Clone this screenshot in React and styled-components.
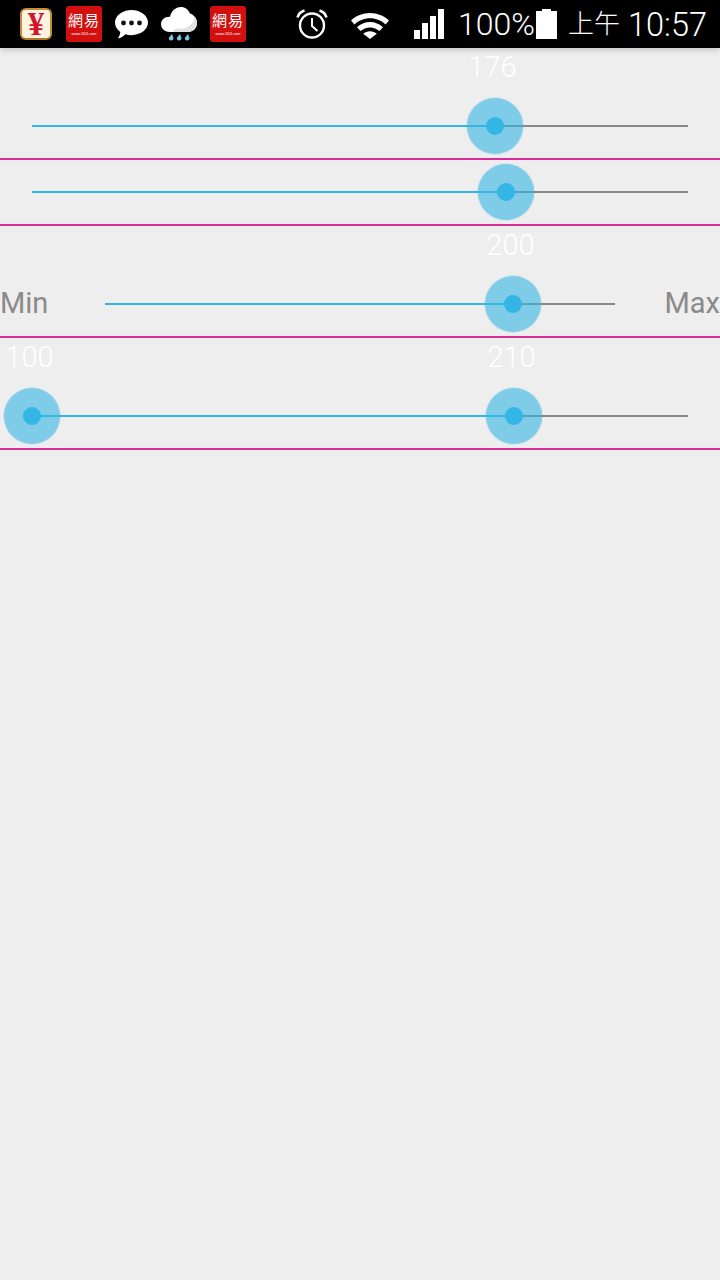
import React from "react";
import styled, { createGlobalStyle } from "styled-components";

const GlobalStyle = createGlobalStyle`
  html, body {
    margin: 0;
    padding: 0;
    background: #eeeeee;
    font-family: Roboto, "Noto Sans", sans-serif;
  }
`;

// slider data, pos is the thumb place along the track (0..1)
const sliders = [
  { id: 1, labeled: true, thumbs: [{ pos: 0.7058, label: "176" }] },
  { id: 2, labeled: false, thumbs: [{ pos: 0.7226 }] },
  { id: 3, labeled: true, min: "Min", max: "Max", thumbs: [{ pos: 0.8, label: "200" }] },
  {
    id: 4,
    labeled: true,
    thumbs: [
      { pos: 0, label: "100" },
      { pos: 0.7348, label: "210" },
    ],
  },
];

function NeteaseIcon() {
  return (
    <Netease>
      <NeteaseTitle>網易</NeteaseTitle>
      <NeteaseUrl>www.163.com</NeteaseUrl>
    </Netease>
  );
}

function ChatIcon() {
  return (
    <svg width="33" height="30" viewBox="0 0 33 30">
      <path
        d="M16.5 1C25.6 1 33 6.7 33 13.6S25.6 26.2 16.5 26.2c-2.2 0-4.300-.3-6.200-.9C8.500 27.500 5.800 29 2.500 29.500c1.700-1.700 2.700-3.900 2.800-6.500C2 20.700 0 17.400 0 13.600 0 6.700 7.400 1 16.500 1z"
        fill="#fff"
      />
      <circle cx="8.500" cy="14" r="2.400" fill="#111" />
      <circle cx="16.500" cy="14" r="2.400" fill="#111" />
      <circle cx="24.500" cy="14" r="2.400" fill="#111" />
    </svg>
  );
}

function RainIcon() {
  return (
    <svg width="36" height="36" viewBox="0 0 36 36">
      <path
        d="M9 26C4 26 0 22.800 0 18.300 0 14 3.500 10.800 8 10.800c.4 0 .7 0 1 .1C10.200 5.300 14.500 1 19.800 1c4.300 0 7.700 2.500 9 6.300C33 9 36 12.500 36 17c0 5-4 9-9 9H9z"
        fill="#fff"
      />
      <path d="M27 26c5 0 9-4 9-9 0-2.600-1-5-2.700-6.600.2 6.800-6.300 12.100-13.300 12.100-3 0-6-.4-8 3.500h15z" fill="#dfe1e2" />
      <path d="M11 28l1.400 3.800a2.300 2.300 0 1 1-4.400-.4L11 28z" fill="#7cc6ea" />
      <path d="M19 28l1.400 3.800a2.300 2.300 0 1 1-4.400-.4L19 28z" fill="#7cc6ea" />
      <path d="M27 28l1.400 3.800a2.300 2.300 0 1 1-4.400-.4L27 28z" fill="#7cc6ea" />
    </svg>
  );
}

function AlarmIcon() {
  return (
    <svg width="32" height="32" viewBox="0 0 32 32" fill="none" stroke="#fff">
      <circle cx="16" cy="17.500" r="12" strokeWidth="2.400" />
      <path d="M16 10v8l5.500 5" strokeWidth="2" />
      <path d="M1.500 9.500C2.500 6 5 3.500 8.500 2.500" strokeWidth="2.600" />
      <path d="M30.500 9.500C29.500 6 27 3.500 23.500 2.500" strokeWidth="2.600" />
    </svg>
  );
}

function WifiIcon() {
  return (
    <svg width="38" height="30" viewBox="0 -4 38 30" fill="#fff">
      <path d="M0 7.500C5 2.800 11.700 0 19 0s14 2.800 19 7.500l-3.500 3.900C30.400 7.600 25 5.300 19 5.300S7.600 7.600 3.500 11.400z" />
      <path d="M6 14.200C9.500 11 14 9 19 9s9.500 2 13 5.200l-3.500 3.900C26 15.800 22.600 14.400 19 14.400s-7 1.400-9.500 3.700z" />
      <path d="M12.200 20.800c1.800-1.600 4.200-2.600 6.800-2.600s5 1 6.800 2.600L19 26z" />
    </svg>
  );
}

function SignalIcon() {
  return (
    <svg width="32" height="30" viewBox="0 0 32 30" fill="#fff">
      <rect x="2" y="21" width="6" height="9" />
      <rect x="10" y="14" width="6" height="16" />
      <rect x="18" y="7" width="6" height="23" />
      <rect x="26" y="0" width="6" height="30" />
    </svg>
  );
}

function BatteryIcon() {
  return (
    <svg width="21" height="30" viewBox="0 0 21 30" fill="#fff">
      <rect x="6" y="0" width="9" height="4" />
      <rect x="0" y="2" width="21" height="28" />
    </svg>
  );
}

function Slider({ item }) {
  const first = item.thumbs.length > 1 ? item.thumbs[0].pos : 0;
  const last = item.thumbs[item.thumbs.length - 1].pos;

  return (
    <Track>
      <ActiveTrack style={{ left: `${first * 100}%`, width: `${(last - first) * 100}%` }} />
      {item.thumbs.map((thumb) => (
        <Thumb key={thumb.pos} style={{ left: `${thumb.pos * 100}%` }}>
          {thumb.label && <ThumbLabel>{thumb.label}</ThumbLabel>}
          <ThumbDot />
        </Thumb>
      ))}
    </Track>
  );
}

export default function App() {
  return (
    <Page>
      <GlobalStyle />
      <StatusBar>
        <NotifyIcons>
          <YenIcon>¥</YenIcon>
          <NeteaseIcon />
          <ChatIcon />
          <RainIcon />
          <NeteaseIcon />
        </NotifyIcons>
        <SystemIcons>
          <AlarmIcon />
          <WifiIcon />
          <SignalIcon />
        </SystemIcons>
        <Percent>100%</Percent>
        <BatteryIcon />
        <Noon>上午</Noon>
        <Clock>10:57</Clock>
      </StatusBar>

      <List>
        {sliders.map((item) => (
          <Row key={item.id} $labeled={item.labeled}>
            {item.min && <SideLabel>{item.min}</SideLabel>}
            <Slider item={item} />
            {item.max && <SideLabel $right>{item.max}</SideLabel>}
          </Row>
        ))}
      </List>
    </Page>
  );
}

const Page = styled.div`
  min-height: 1280px;
  background: #eeeeee;
`;

const StatusBar = styled.header`
  position: relative;
  display: flex;
  align-items: center;
  height: 48px;
  padding-left: 20px;
  background: #000;
  color: #fff;
  box-shadow: 0 2px 6px rgba(0, 0, 0, 0.18);
`;

const NotifyIcons = styled.div`
  display: flex;
  align-items: center;
  gap: 13px;
  width: 276px;
`;

const YenIcon = styled.div`
  display: flex;
  align-items: center;
  justify-content: center;
  box-sizing: border-box;
  width: 32px;
  height: 32px;
  margin-right: 1px;
  border: 2px solid #c98a3c;
  border-bottom-color: #b5752a;
  border-radius: 6px;
  background: #fdf3de;
  color: #d4142e;
  font-family: "Liberation Serif", serif;
  font-size: 33px;
  font-weight: 700;
  line-height: 28px;
`;

const Netease = styled.div`
  display: flex;
  flex-direction: column;
  align-items: center;
  box-sizing: border-box;
  width: 36px;
  height: 36px;
  padding-top: 3px;
  border-radius: 3px;
  background: #d2100f;
  color: #fff;
`;

const NeteaseTitle = styled.span`
  font-family: "Noto Sans CJK TC", sans-serif;
  font-size: 15px;
  line-height: 22px;
  letter-spacing: 1px;
`;

const NeteaseUrl = styled.span`
  font-family: "Liberation Sans", sans-serif;
  font-size: 4px;
  line-height: 5px;
`;

const SystemIcons = styled.div`
  display: flex;
  align-items: center;
  gap: 23px;
  width: 162px;
`;

const Percent = styled.span`
  width: 78px;
  font-size: 32px;
  font-weight: 300;
`;

const Noon = styled.span`
  width: 60px;
  margin-left: 11px;
  padding-bottom: 4px;
  font-family: "Noto Sans CJK TC", sans-serif;
  font-size: 26px;
  font-weight: 300;
  line-height: 36px;
`;

const Clock = styled.span`
  padding-top: 1px;
  font-size: 32.5px;
  font-weight: 300;
`;

const List = styled.main`
  display: flex;
  flex-direction: column;
`;

const Row = styled.section`
  display: flex;
  align-items: center;
  height: 64px;
  padding-top: ${(p) => (p.$labeled ? "46px" : "0")};
  border-bottom: 2px solid #db2a9a;
`;

const SideLabel = styled.span`
  flex: none;
  width: 73px;
  padding-bottom: 2px;
  color: #8a8a8a;
  font-size: 29px;
  text-align: ${(p) => (p.$right ? "right" : "left")};
`;

const Track = styled.div`
  position: relative;
  flex: 1;
  height: 2px;
  margin: 0 32px;
  background: #888888;
`;

const ActiveTrack = styled.div`
  position: absolute;
  top: 0;
  height: 2px;
  background: #33b5e5;
`;

const Thumb = styled.div`
  position: absolute;
  top: 1px;
  display: flex;
  align-items: center;
  justify-content: center;
  width: 56px;
  height: 56px;
  border-radius: 50%;
  background: rgba(51, 181, 229, 0.6);
  box-shadow: 0 0 1px 0.5px rgba(51, 181, 229, 0.3);
  transform: translate(-50%, -50%);
`;

const ThumbDot = styled.div`
  width: 18px;
  height: 18px;
  border-radius: 50%;
  background: #33b5e5;
`;

const ThumbLabel = styled.span`
  position: absolute;
  top: -51px;
  left: -32px;
  width: 115px;
  color: #fff;
  font-size: 29px;
  font-weight: 300;
  line-height: 40px;
  text-align: center;
`;
